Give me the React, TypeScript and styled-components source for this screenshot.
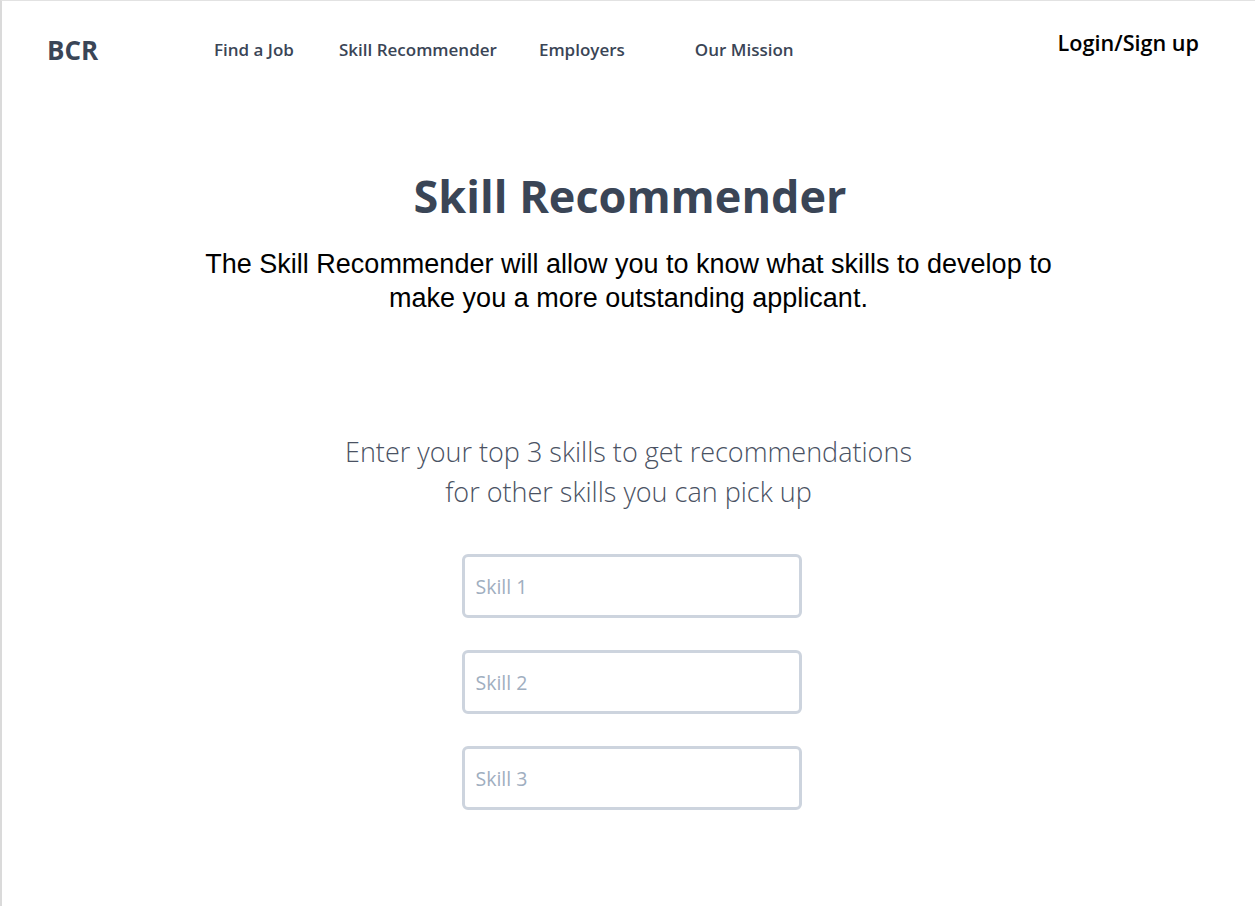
import React from 'react';
import styled, { createGlobalStyle } from 'styled-components';

const GlobalStyle = createGlobalStyle`
    body{
        margin:0;
        background:#ffffff;
        font-family:"Open Sans", "Liberation Sans", sans-serif;
    }
`;

const Page = styled.div`
    box-sizing:border-box;
    min-height:100vh;
    border-left:2px solid #dadada;
    border-top:1px solid #e2e2e2;
`;

const Header = styled.header`
    display:flex;
    flex-direction:row;
    align-items:flex-start;
    padding-left:45px;
    padding-right:56px;
    padding-top:32px;
    height:76px;
    box-sizing:border-box;
`;

const Logo = styled.div`
    font-weight:700;
    font-size:26px;
    line-height:34px;
    color:#3a4556;
    width:120px;
`;

const Nav = styled.nav`
    display:flex;
    flex-direction:row;
    padding-top:5px;
    flex-grow:1;
    margin-left:47px;
`;

const NavLink = styled.a<{ gap?: number }>`
    font-weight:600;
    font-size:17px;
    line-height:24px;
    color:#3a4556;
    text-decoration:none;
    margin-left:${(p) => p.gap ?? 0}px;
    cursor:pointer;
`;

const Login = styled.a`
    font-weight:600;
    font-size:21.6px;
    line-height:24px;
    margin-top:-2px;
    color:#000000;
    text-decoration:none;
    cursor:pointer;
`;

const Hero = styled.section`
    display:flex;
    flex-direction:column;
    align-items:center;
    text-align:center;
    padding-top:88px;
`;

const Title = styled.h1`
    margin:0;
    margin-left:3px;
    font-weight:700;
    font-size:45px;
    line-height:62px;
    color:#3a4556;
`;

const Lead = styled.p`
    margin:0;
    margin-top:20px;
    font-family:"Liberation Sans", Arial, sans-serif;
    font-size:27px;
    line-height:34px;
    color:#000000;
`;

const Prompt = styled.p`
    margin:0;
    margin-top:117px;
    font-weight:300;
    font-size:27px;
    line-height:40px;
    color:#4a5263;
`;

const Form = styled.form`
    display:flex;
    flex-direction:column;
    gap:32px;
    margin-top:42px;
    margin-left:6px;
`;

const SkillInput = styled.input`
    box-sizing:border-box;
    width:340px;
    height:64px;
    border:3px solid #cdd4de;
    border-radius:6px;
    padding:0 11px;
    font-family:"Open Sans", sans-serif;
    font-size:19.5px;
    color:#2d3748;
    outline:none;
    &::placeholder{
        color:#a0aec0;
    }
`;

const links = [
    { label: 'Find a Job', gap: 0 },
    { label: 'Skill Recommender', gap: 45 },
    { label: 'Employers', gap: 42 },
    { label: 'Our Mission', gap: 70 },
];

const App = () => {
    return (
        <>
            <GlobalStyle />
            <Page>
                <Header>
                    <Logo>BCR</Logo>
                    <Nav>
                        {links.map((l) => (
                            <NavLink key={l.label} gap={l.gap}>{l.label}</NavLink>
                        ))}
                    </Nav>
                    <Login>Login/Sign up</Login>
                </Header>
                <Hero>
                    <Title>Skill Recommender</Title>
                    <Lead>
                        The Skill Recommender will allow you to know what skills to develop to<br />
                        make you a more outstanding applicant.
                    </Lead>
                    <Prompt>
                        Enter your top 3 skills to get recommendations<br />
                        for other skills you can pick up
                    </Prompt>
                    <Form onSubmit={(e) => e.preventDefault()}>
                        <SkillInput placeholder="Skill 1" />
                        <SkillInput placeholder="Skill 2" />
                        <SkillInput placeholder="Skill 3" />
                    </Form>
                </Hero>
            </Page>
        </>
    );
};

export default App;
